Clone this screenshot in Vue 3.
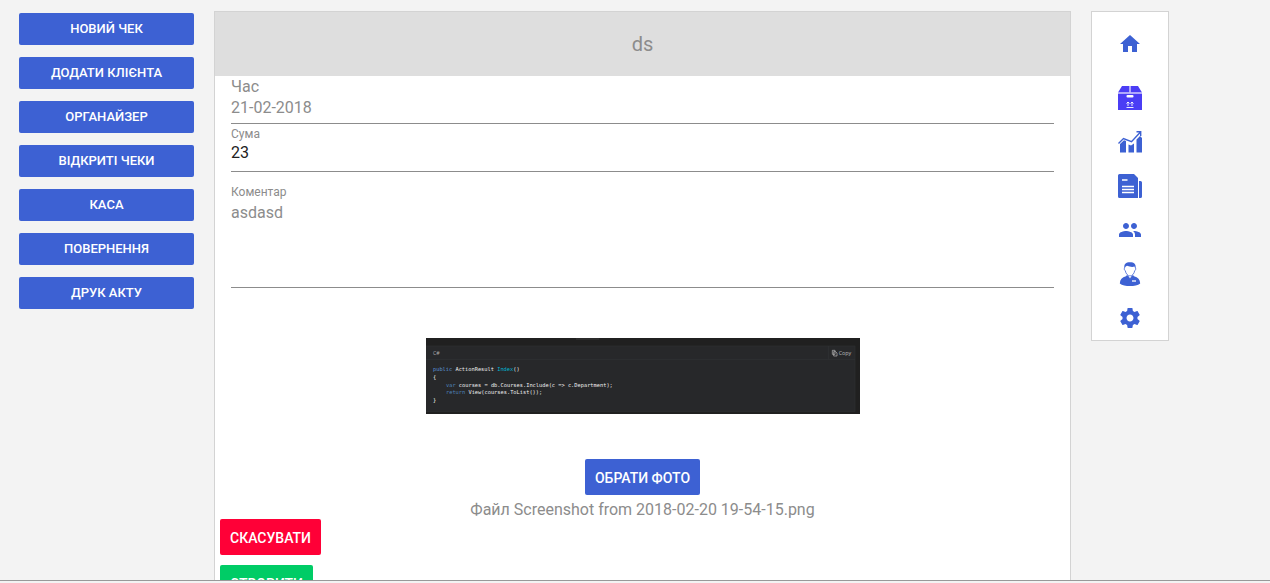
<script setup>
import { ref } from 'vue'

const actions = [
  'Новий чек',
  'Додати клієнта',
  'Органайзер',
  'Відкриті чеки',
  'Каса',
  'Повернення',
  'Друк акту',
]
const date = ref('21-02-2018')
const sum = ref('23')
const comment = ref('asdasd')
const fileName = ref('Screenshot from 2018-02-20 19-54-15.png')
</script>

<template>
  <div class="page">
    <div class="content">
      <aside class="actions">
        <button v-for="a in actions" :key="a" type="button" class="btn wide">{{ a }}</button>
      </aside>

      <main class="card">
        <h1 class="title">ds</h1>
        <form class="form" @submit.prevent>
          <div class="field date">
            <label for="date">Час</label>
            <input id="date" v-model="date" type="text" readonly />
          </div>
          <div class="field sum">
            <label for="sum">Сума</label>
            <input id="sum" v-model="sum" type="text" />
          </div>
          <div class="field comment">
            <label for="comment">Коментар</label>
            <textarea id="comment" v-model="comment"></textarea>
          </div>
        </form>

        <section class="photo">
          <svg class="preview" viewBox="0 0 1302 228" role="img" aria-label="C#">
            <rect width="1302" height="228" fill="#202020" />
            <rect x="450" width="70" height="6" fill="#2b2b2b" />
            <rect x="-3" y="24" width="1290" height="196" fill="#27282a" stroke="#2e3032" stroke-width="2" />
            <path d="M0 64H1287M1207 24V64" stroke="#323436" stroke-width="2" />
            <text x="21" y="51" class="ui" fill="#aaa">C#</text>
            <g fill="none" stroke="#bbb" stroke-width="2">
              <path d="M1219 37h8v12h-8zM1223 41h6l4 4v9h-10z" />
            </g>
            <text x="1238" y="52" class="ui" fill="#bbb">Copy</text>
            <g class="code" fill="#f0f0f0">
              <text x="21" y="100"><tspan fill="#5b93d4">public</tspan> ActionResult <tspan fill="#00b8d8">Index</tspan>()</text>
              <text x="21" y="123">{</text>
              <text x="60" y="146"><tspan fill="#4f83ba">var</tspan> courses = db.Courses.Include(c =&gt; c.Department);</text>
              <text x="60" y="169"><tspan fill="#4f83ba">return</tspan> View(courses.ToList());</text>
              <text x="21" y="192">}</text>
            </g>
          </svg>
          <button type="button" class="btn">Обрати фото</button>
          <p class="file">Файл {{ fileName }}</p>
        </section>

        <div class="submit">
          <button type="button" class="btn cancel">Скасувати</button>
          <button type="button" class="btn create">Створити</button>
        </div>
      </main>

      <nav class="menu">
        <a href="#" class="home" aria-label="Home">
          <svg viewBox="0 0 24 24"><path d="M10 20v-6h4v6h5v-8h3L12 3 2 12h3v8z" /></svg>
        </a>
        <a href="#" aria-label="Goods">
          <svg viewBox="0 0 24 24" class="box">
            <path d="M4 0h7.500v6.500H0zM12.500 0H20l4 6.500H12.500zM0 7.500h24V24H0z" />
            <path d="M0 6.500h24v1H0zM11.500 0h1v6.500h-1z" fill="#b9b3fb" />
            <rect x="8.500" y="9" width="7" height="2.500" rx="1" fill="#fff" />
            <path d="M8.500 21.500h7M10 20v-4M14 20v-4M8.500 17.500L10 16l1.500 1.500M12.500 17.500L14 16l1.500 1.500" fill="none" stroke="#fff" stroke-width=".9" />
          </svg>
        </a>
        <a href="#" aria-label="Statistics">
          <svg viewBox="0 0 24 24">
            <path d="M2 14l4-3.800 2 .8V22.500H2zM10.500 14.500l2.500 1 3-2v9h-5.500zM18.500 9.500L22 6l2 2v14.500h-5.500z" />
            <path d="M.5 13.500L5.500 8.500l8 3.200L22.500 2M18.500 1.800h4.200V6" fill="none" stroke="#3d61d3" stroke-width="1.400" />
          </svg>
        </a>
        <a href="#" aria-label="Documents">
          <svg viewBox="0 0 24 24">
            <path d="M1.500 0H16l4 4v20H1.500Q0 24 0 22.500v-21Q0 0 1.500 0zM21 7h1.500Q24 7 24 8.500v14Q24 24 22.500 24H21z" />
            <path d="M4 6h5.500M4 12.500h12M4 15.500h12M4 18.500h12" stroke="#fff" stroke-width="1.300" />
          </svg>
        </a>
        <a href="#" aria-label="Clients">
          <svg viewBox="0 0 24 24"><path d="M16 11c1.660 0 2.990-1.340 2.990-3S17.660 5 16 5c-1.660 0-3 1.340-3 3s1.340 3 3 3zm-8 0c1.660 0 2.990-1.340 2.990-3S9.660 5 8 5C6.340 5 5 6.340 5 8s1.340 3 3 3zm0 2c-2.330 0-7 1.170-7 3.500V19h14v-2.500c0-2.330-4.670-3.500-7-3.500zm8 0c-.29 0-.62.02-.97.05 1.160.84 1.970 1.970 1.970 3.450V19h6v-2.500c0-2.330-4.670-3.500-7-3.500z" /></svg>
        </a>
        <a href="#" aria-label="Profile">
          <svg viewBox="0 0 24 24">
            <path d="M6.500 6.500C5.500 2 8 .2 12 .2s6.500 1.800 5.500 6.500l-1-2.200c-2 .8-5 .3-7.500-.8-1.300.5-1.800 1.300-2.500 2.800z" />
            <path d="M6.700 5.500c-1 1.800 0 3 .6 3.200.5 3 2.500 5.300 4.700 5.300s4.200-2.300 4.700-5.300c.6-.2 1.600-1.400.6-3.200" fill="none" stroke="#3d61d3" stroke-width=".8" />
            <path d="M9 13l3 2.500L15 13l1 1.200c4 1 6 3.300 6.200 7.200C20 23.300 16 24 12 24s-8-.7-10.200-2.600C2 17.500 4 15.200 8 14.200z" />
            <path d="M14 19h4" stroke="#fff" stroke-width="1.300" />
            <path d="M11 14.500l1 2 1-2" fill="#fff" />
          </svg>
        </a>
        <a href="#" aria-label="Settings">
          <svg viewBox="0 0 24 24"><path d="M19.430 12.980c.04-.32.07-.64.07-.98s-.03-.66-.07-.98l2.110-1.650c.19-.15.24-.42.12-.64l-2-3.460c-.12-.22-.39-.3-.61-.22l-2.490 1c-.52-.4-1.080-.73-1.690-.98l-.38-2.650C14.460 2.180 14.250 2 14 2h-4c-.25 0-.46.18-.49.42l-.38 2.650c-.61.25-1.170.59-1.690.98l-2.490-1c-.23-.09-.49 0-.61.22l-2 3.460c-.13.22-.07.49.12.64l2.110 1.650c-.04.32-.07.65-.07.98s.03.66.07.98l-2.110 1.650c-.19.15-.24.42-.12.64l2 3.460c.12.22.39.3.61.22l2.490-1c.52.4 1.080.73 1.690.98l.38 2.650c.03.24.24.42.49.42h4c.25 0 .46-.18.49-.42l.38-2.650c.61-.25 1.170-.59 1.690-.98l2.490 1c.23.09.49 0 .61-.22l2-3.460c.12-.22.07-.49-.12-.64l-2.110-1.650zM12 15.500c-1.930 0-3.500-1.570-3.500-3.500s1.570-3.500 3.500-3.500 3.500 1.570 3.500 3.500-1.570 3.500-3.500 3.500z" /></svg>
        </a>
      </nav>
    </div>
    <footer class="footer"></footer>
  </div>
</template>

<style>
body {
  margin: 0;
  background: #f3f3f3;
}
</style>

<style scoped>
.page {
  display: flex;
  flex-direction: column;
  height: 100vh;
  overflow: hidden;
  box-sizing: border-box;
  font-family: Roboto, "Liberation Sans", sans-serif;
  font-size: 16px;
  color: #8c8c8c;
}
.page * {
  box-sizing: border-box;
}
.content {
  flex: 1;
  min-height: 0;
  overflow: hidden;
  display: grid;
  grid-template-columns: 175px minmax(0, 1fr) 78px;
  column-gap: 20px;
  align-items: start;
  padding: 11px 101px 0 19px;
}
.footer {
  flex: none;
  height: 3px;
  border-top: 1px solid #999;
}
.actions {
  display: flex;
  flex-direction: column;
  gap: 12px;
  padding-top: 2px;
}
.btn {
  min-height: 36px;
  padding: 1px 10px 0;
  border: 0;
  border-radius: 2px;
  background: #3d61d3;
  color: #fff;
  font-family: inherit;
  font-size: 14px;
  font-weight: 500;
  line-height: 20px;
  text-transform: uppercase;
  cursor: pointer;
}
.wide {
  min-height: 32px;
  padding: 0 10px;
  font-size: 13px;
}
.cancel {
  background: #ff0037;
}
.create {
  background: #00cc66;
}
.card {
  background: #fff;
  border: 1px solid #d3d3d3;
}
.title {
  margin: 0;
  background: #dedede;
  font-size: 20px;
  font-weight: 400;
  line-height: 64px;
  text-align: center;
}
.form {
  padding: 0 16px;
}
.field {
  display: flex;
  flex-direction: column;
  border-bottom: 1px solid #8c8c8c;
}
.field label {
  font-size: 12px;
  line-height: 16px;
}
.field input,
.field textarea {
  width: 100%;
  margin: 0;
  padding: 0;
  border: 0;
  outline: 0;
  background: transparent;
  color: inherit;
  font: inherit;
  line-height: 20px;
  resize: none;
}
.field input {
  height: 20px;
  margin-top: 1px;
}
.date label {
  font-size: 16px;
  line-height: 21px;
}
.date input {
  margin-bottom: 5px;
}
.sum {
  padding-top: 2px;
}
.sum input {
  margin-bottom: 8px;
  color: #212121;
}
.comment {
  padding-top: 12px;
}
.comment textarea {
  height: 84px;
  margin-top: 3px;
}
.photo {
  display: flex;
  flex-direction: column;
  align-items: center;
  padding: 50px 16px 0;
}
.preview {
  width: 434px;
  max-width: 100%;
  height: auto;
  margin-bottom: 45px;
}
.ui {
  font-family: "Open Sans", sans-serif;
  font-size: 16px;
}
.code {
  font-family: "DejaVu Sans Mono", monospace;
  font-size: 16px;
  white-space: pre;
}
.file {
  margin: 5px 0 0;
  line-height: 19px;
}
.submit {
  display: flex;
  flex-direction: column;
  align-items: flex-start;
  gap: 10px;
  padding: 0 5px 10px;
}
.menu {
  display: flex;
  flex-direction: column;
  padding-top: 10px;
  background: #fff;
  border: 1px solid #d3d3d3;
}
.menu a {
  display: flex;
  align-items: center;
  justify-content: center;
  height: 44px;
  color: #3d61d3;
}
.menu .home {
  margin-bottom: 10px;
}
.menu svg {
  width: 24px;
  height: 24px;
  fill: currentColor;
}
.menu .box {
  fill: #4b3df5;
}
</style>
